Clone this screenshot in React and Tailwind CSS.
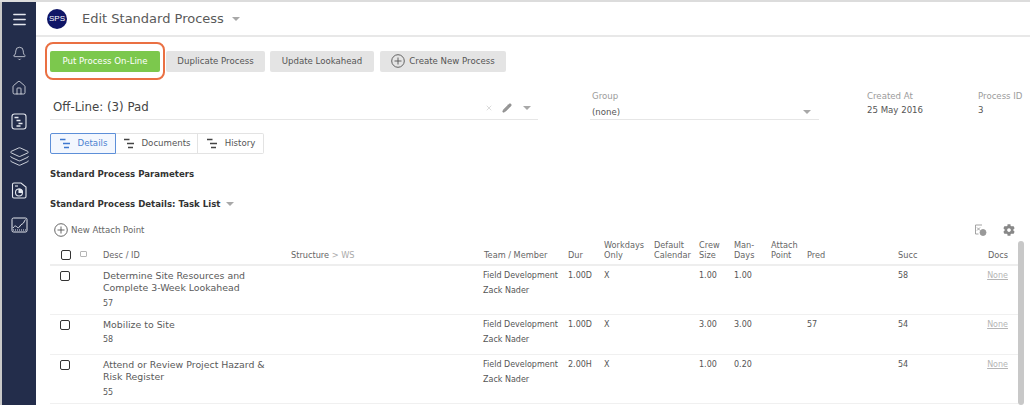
import React from 'react';
import { Menu, Bell, Home, Layers, Pencil, X } from 'lucide-react';
import { FaCog } from 'react-icons/fa';

const FONT = "font-['DejaVu_Sans',sans-serif]";
const COLS = 'grid grid-cols-[53px_188px_193px_84px_36px_50px_45px_35px_37px_36px_91px_62px_48px]';

const rows = [
  { id: '57', title: ['Determine Site Resources and', 'Complete 3-Week Lookahead'], dur: '1.00D', crew: '1.00', man: '1.00', pred: '', succ: '58', h: 'h-[49px]' },
  { id: '58', title: ['Mobilize to Site'], dur: '1.00D', crew: '3.00', man: '3.00', pred: '57', succ: '54', h: 'h-[40px]' },
  { id: '55', title: ['Attend or Review Project Hazard &', 'Risk Register'], dur: '2.00H', crew: '1.00', man: '0.20', pred: '', succ: '54', h: 'h-[49px]' },
];

const Caret = ({ className = '' }) => (
  <span className={`inline-block w-0 h-0 border-x-[4px] border-x-transparent border-t-[4px] border-t-[#a8a8a8] ${className}`} />
);

const PlusCircle = ({ size = 14 }) => (
  <svg width={size} height={size} viewBox="0 0 14 14" fill="none" stroke="#555" strokeWidth="0.9">
    <circle cx="7" cy="7" r="6.3" />
    <path d="M7 3.5v7M3.5 7h7" />
  </svg>
);

const GanttIcon = ({ color = '#444' }) => (
  <svg width="13" height="11" viewBox="0 0 13 11" fill="none" stroke={color} strokeWidth="1.4">
    <path d="M1 1.500h5.500M4 5.500h7M5 9.500h5" />
  </svg>
);

const SideIcon = ({ children }) => <div className="h-[34.4px] flex items-center justify-center">{children}</div>;

const Sidebar = () => (
  <aside className="w-[34px] shrink-0 bg-[#232d4b] flex flex-col items-center text-[#e4e7ee]">
    <div className="h-[34px] w-full flex items-center justify-center">
      <Menu size={17} strokeWidth={2} />
    </div>
    <div className="flex flex-col w-full">
      <SideIcon><Bell size={15} strokeWidth={1.2} /></SideIcon>
      <SideIcon><Home size={16} strokeWidth={1.2} /></SideIcon>
      <SideIcon>
        <svg width="16" height="17" viewBox="0 0 16 17" fill="none" stroke="currentColor" strokeWidth="1.1">
          <rect x="1" y="1" width="14" height="15" rx="2.5" />
          <path d="M3.500 4.500h4M5.500 7.500h4M7.500 10.500h4M5.500 13h4" strokeWidth="1.3" />
        </svg>
      </SideIcon>
      <SideIcon><Layers size={21} strokeWidth={1} /></SideIcon>
      <SideIcon>
        <svg width="16" height="17" viewBox="0 0 16 17" fill="none" stroke="currentColor" strokeWidth="1.1">
          <path d="M3 1h7l5 4v9.500a1.500 1.500 0 0 1-1.500 1.500h-10.500a1.500 1.500 0 0 1-1.500-1.500v-12a1.500 1.500 0 0 1 1.500-1.500z" />
          <path d="M4 4h3" />
          <circle cx="8" cy="10.500" r="3.500" />
          <path d="M8 10.500v-3.500a3.500 3.500 0 0 1 3.500 3.500z" fill="currentColor" />
        </svg>
      </SideIcon>
      <SideIcon>
        <svg width="17" height="16" viewBox="0 0 17 16" fill="none" stroke="currentColor" strokeWidth="1">
          <rect x="1" y="1" width="15" height="14" rx="1.500" />
          <path d="M2 11c2-3 3-2 4-1s2 1 3-1 3-2 3.500-3 1.500-3 2-3.500" />
          <path d="M2 13h13" strokeDasharray="1 1" />
        </svg>
      </SideIcon>
    </div>
  </aside>
);

const Header = () => (
  <header className="h-[35px] shrink-0 border-b-2 border-[#e8e8e8] flex items-center pl-[11px]">
    <div className="w-[20px] h-[20px] rounded-full bg-[#0f1566] text-white flex items-center justify-center text-[8px] font-['Liberation_Sans',sans-serif]">SPS</div>
    <h1 className="ml-[15px] text-[13px] text-[#5a5a5a]">Edit Standard Process</h1>
    <Caret className="ml-[8px]" />
  </header>
);

const ActionBar = () => (
  <div className="flex items-center pl-[14px] pt-[7px] h-[34px] box-content text-[8.6px] text-[#555]">
    <div className="relative">
      <div className="absolute -inset-x-[5px] -top-[9px] -bottom-[8px] rounded-[8px] border-2 border-[#ea7043]" />
      <button className="block h-[21px] w-[110px] rounded-[2px] bg-[#7cc84d] text-white">Put Process On-Line</button>
    </div>
    <button className="h-[21px] w-[99px] ml-[6px] rounded-[2px] bg-[#e4e4e4]">Duplicate Process</button>
    <button className="h-[21px] w-[104px] ml-[5px] rounded-[2px] bg-[#e4e4e4]">Update Lookahead</button>
    <button className="h-[21px] w-[126px] ml-[6px] rounded-[2px] bg-[#e4e4e4] flex items-center justify-center gap-[4px]">
      <PlusCircle />
      <span>Create New Process</span>
    </button>
  </div>
);

const InfoRow = () => (
  <div className="flex pl-[14px] mt-[3px] h-[40px] text-[8.6px]">
    <div className="w-[488px] h-[29px] mt-[10px] pt-[5px] border-b border-[#e6e6e6] flex items-center pl-[3px]">
      <span className="text-[11.8px] text-[#444] flex-1">Off-Line: (3) Pad</span>
      <X size={8} className="text-[#c8c8c8] mr-[9px]" />
      <Pencil size={10} className="text-[#888] mr-[11px]" fill="#999" />
      <Caret className="mr-[7px]" />
    </div>
    <div className="ml-[52px] w-[229px] pt-[9px]">
      <div className="text-[#9b9b9b] pl-[2px] leading-[12px]">Group</div>
      <div className="h-[18px] pt-[3px] border-b border-[#e6e6e6] flex items-center justify-between pl-[2px] pr-[8px] text-[#555]">
        <span>(none)</span>
        <Caret />
      </div>
    </div>
    <div className="ml-[48px] w-[111px] pt-[9px] leading-[12px]">
      <div className="text-[#9b9b9b]">Created At</div>
      <div className="text-[#555] mt-[2px]">25 May 2016</div>
    </div>
    <div className="pt-[9px] leading-[12px] whitespace-nowrap">
      <div className="text-[#9b9b9b]">Process ID</div>
      <div className="text-[#555] mt-[2px]">3</div>
    </div>
  </div>
);

const Tabs = () => (
  <div className="flex pl-[14px] mt-[12px] text-[8.6px] text-[#555] h-[21px]">
    <div className="w-[66px] rounded-l-[2px] border border-[#5d8fd8] bg-[#f3f7fe] text-[#4a7fd0] flex items-center justify-center gap-[6px]">
      <GanttIcon color="#3f78cf" /> Details
    </div>
    <div className="w-[82px] border-y border-r border-[#e3e3e3] flex items-center justify-center gap-[6px]">
      <GanttIcon /> Documents
    </div>
    <div className="w-[66px] rounded-r-[2px] border-y border-r border-[#e3e3e3] flex items-center justify-center gap-[6px]">
      <GanttIcon /> History
    </div>
  </div>
);

const Checkbox = ({ className = '' }) => (
  <span className={`block w-[10px] h-[10px] rounded-[2px] border-[1.5px] border-[#333] ${className}`} />
);

const TableHead = () => (
  <div className={`${COLS} h-[29px] items-end pb-[4px] border-b-2 border-[#eeeeee] text-[8.2px] leading-[10px] text-[#666]`}>
    <div className="flex items-center pl-[11px] gap-[9px]">
      <Checkbox />
      <span className="block w-[7px] h-[6px] border border-[#b5b5b5] rounded-[1px] -mt-[2px]" />
    </div>
    <div>Desc / ID</div>
    <div>Structure <span className="text-[#aaa]">&gt; WS</span></div>
    <div>Team / Member</div>
    <div>Dur</div>
    <div>Workdays Only</div>
    <div>Default Calendar</div>
    <div>Crew Size</div>
    <div>Man-<br />Days</div>
    <div>Attach Point</div>
    <div>Pred</div>
    <div>Succ</div>
    <div className="text-right">Docs</div>
  </div>
);

const Row = ({ row }) => (
  <div className={`${COLS} ${row.h} pt-[4px] border-b border-[#f0f0f0] text-[8px] leading-[12px] text-[#555] whitespace-nowrap`}>
    <div className="pl-[10px] pt-[1px]"><Checkbox /></div>
    <div className="text-[#5a5a5a] text-[9.4px]">
      {row.title.map((t) => <div key={t}>{t}</div>)}
      <div className={`${row.title.length > 1 ? 'mt-[4px]' : 'mt-[3px]'} text-[8px]`}>{row.id}</div>
    </div>
    <div />
    <div className="-ml-[1px]">
      <div>Field Development</div>
      <div className="mt-[3px]">Zack Nader</div>
    </div>
    <div>{row.dur}</div>
    <div>X</div>
    <div />
    <div>{row.crew}</div>
    <div>{row.man}</div>
    <div />
    <div>{row.pred}</div>
    <div>{row.succ}</div>
    <div className="text-right text-[#b5b5b5] underline">None</div>
  </div>
);

const App = () => (
  <div className={`w-[1030px] h-[405px] overflow-hidden bg-white flex flex-col ${FONT}`}>
    <div className="h-[2px] shrink-0 bg-[#dcdcdc]" />
    <div className="flex flex-1 min-h-0">
      <div className="w-[2px] shrink-0 bg-[#c9c9c9]" />
      <Sidebar />
      <main className="flex-1 min-w-0 flex flex-col">
        <Header />
        <ActionBar />
        <InfoRow />
        <Tabs />
        <div className="pl-[14px] mt-[14px] text-[8.6px] font-bold text-[#333] leading-[12px]">Standard Process Parameters</div>
        <div className="pl-[14px] mt-[18px] text-[8.6px] font-bold text-[#333] leading-[12px] flex items-center">
          <span>Standard Process Details: Task List</span>
          <Caret className="ml-[6px]" />
        </div>
        <div className="pl-[18px] pr-[15px] mt-[13px] h-[14px] flex items-center text-[8.6px] text-[#666]">
          <PlusCircle />
          <span className="ml-[3px] flex-1">New Attach Point</span>
          <svg width="13" height="12" viewBox="0 0 13 12" fill="none" stroke="#999" strokeWidth="0.9" className="mr-[16px]">
            <path d="M8 1H1.500v9h3" />
            <path d="M3 3.500l3 3M6 3.500l-3 3" />
            <circle cx="9" cy="8.500" r="3" fill="#999" />
          </svg>
          <FaCog size={12} color="#888" />
        </div>
        <div className="flex flex-1 min-h-0 pl-[14px]">
          <div className="w-[968px]">
            <TableHead />
            {rows.map((row) => <Row key={row.id} row={row} />)}
          </div>
          <div className="w-[6px] mt-[4px] rounded bg-[#c8c8c8]" />
        </div>
      </main>
    </div>
  </div>
);

export default App;
